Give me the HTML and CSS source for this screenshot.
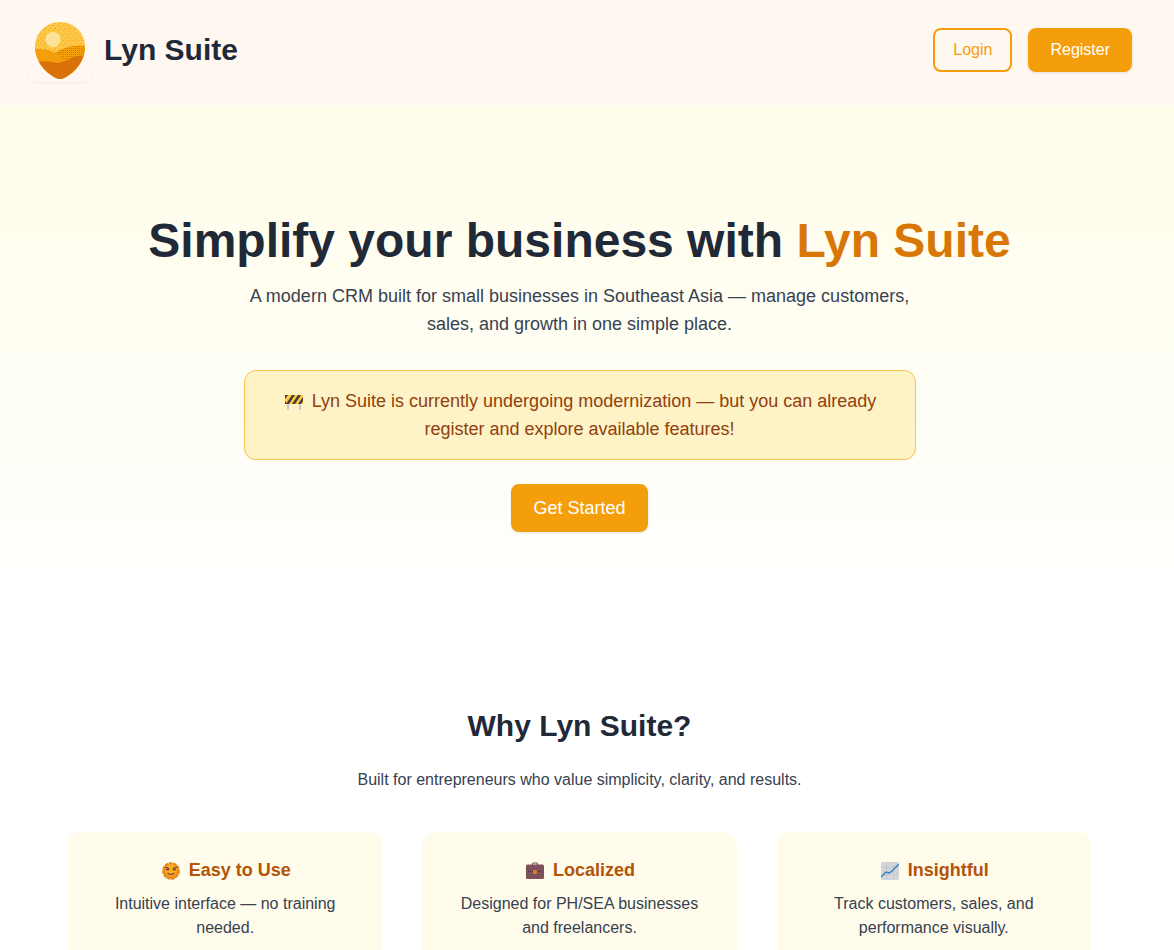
FILE: index.html
```html
<!DOCTYPE html>
<html lang="en">
<head>
  <meta charset="UTF-8">
  <meta name="viewport" content="width=device-width, initial-scale=1.0">
  <title>Lyn Suite</title>
  <link rel="stylesheet" href="styles.css">
</head>
<body>

  <header class="site-header">
    <a class="brand" href="#">
      <span class="brand-logo">
        <svg viewBox="0 0 50 57" width="50" height="57" aria-hidden="true">
          <defs>
            <clipPath id="drop">
              <path d="M25 0C39 0 50 11 50 25C50 38 41 50 29 56Q25 58 21 56C9 50 0 38 0 25C0 11 11 0 25 0Z"/>
            </clipPath>
            <pattern id="grain" width="5" height="5" patternUnits="userSpaceOnUse">
              <rect x="0" y="1" width="1" height="1" fill="#f5a21a"/>
              <rect x="3" y="3" width="1" height="1" fill="#f5a21a"/>
            </pattern>
            <pattern id="sand" width="2" height="2" patternUnits="userSpaceOnUse">
              <rect width="2" height="2" fill="#f59e0b"/>
              <rect width="1" height="1" fill="#d97706"/>
            </pattern>
          </defs>
          <g clip-path="url(#drop)">
            <rect width="50" height="57" fill="#fdc647"/>
            <rect width="50" height="30" fill="url(#grain)"/>
            <circle cx="18" cy="17.500" r="7.500" fill="#fde39a"/>
            <path d="M0 27Q10 26 20 31Q34 22 50 24V57H0Z" fill="#f59e0b"/>
            <path d="M20 31Q34 22 50 24V34Q36 35 30 38Z" fill="url(#sand)"/>
            <path d="M0 40Q12 38 22 41Q30 40 36 36Q42 33 50 34V57H0Z" fill="#d97309"/>
          </g>
        </svg>
      </span>
      <span class="brand-name">Lyn Suite</span>
    </a>
    <nav class="header-actions">
      <a class="btn btn-outline" href="#login">Login</a>
      <a class="btn btn-primary" href="#register">Register</a>
    </nav>
  </header>

  <main>
    <section class="hero">
      <h1>Simplify your business with <span class="accent">Lyn Suite</span></h1>
      <p class="hero-text">A modern CRM built for small businesses in Southeast Asia — manage customers, sales, and growth in one simple place.</p>
      <div class="notice">
        <svg class="icon" viewBox="0 0 18 18" aria-hidden="true">
          <path d="M3 10V17M15 10V17" stroke="#b9bdc6" stroke-width="1.5"/>
          <rect y="2" width="18" height="9" fill="#ffc83d"/>
          <path d="M0 2H3L0 6ZM7 2H10L4 11H1ZM13 2H16L10 11H7ZM18 4V8L16 11H13ZM0 8L2 11H0Z" fill="#433b3b"/>
        </svg>
        Lyn Suite is currently undergoing modernization — but you can already register and explore available features!
      </div>
      <a class="btn btn-primary btn-large" href="#register">Get Started</a>
    </section>

    <section class="features">
      <h2>Why Lyn Suite?</h2>
      <p class="features-text">Built for entrepreneurs who value simplicity, clarity, and results.</p>
      <div class="cards">
        <article class="card">
          <h3>
            <svg class="icon" viewBox="0 0 18 18" aria-hidden="true">
              <circle cx="9" cy="9" r="7.8" fill="#f59414" stroke="#e48213" stroke-width="2" stroke-dasharray="3.5 0.8"/>
              <circle cx="9" cy="8" r="6" fill="#fdab27"/>
              <path d="M3 5L7 6.5M15 5L11 6.5M4 8Q5.500 6.500 7 8M11 8Q12.500 6.500 14 8M5.500 11Q9 14 12.500 11" fill="none" stroke="#74452f" stroke-width="1.200"/>
            </svg>
            Easy to Use
          </h3>
          <p>Intuitive interface — no training needed.</p>
        </article>
        <article class="card">
          <h3>
            <svg class="icon" viewBox="0 0 18 18" aria-hidden="true">
              <path d="M6.500 4V2.500Q6.500 1 7.500 1H10.500Q11.500 1 11.500 2.500V4" fill="none" stroke="#6b4650" stroke-width="1.200"/>
              <rect y="2.500" width="18" height="14.500" rx="1.500" fill="#7d505c"/>
              <path d="M2 9.500H16" stroke="#4a2f3d" stroke-dasharray="1 1"/>
              <rect x="7" y="8" width="4" height="4" rx="1" fill="#d67d2e"/>
            </svg>
            Localized
          </h3>
          <p>Designed for PH/SEA businesses and freelancers.</p>
        </article>
        <article class="card">
          <h3>
            <svg class="icon" viewBox="0 0 18 18" aria-hidden="true">
              <rect width="18" height="18" rx="1.500" fill="#d3d5da"/>
              <path d="M0 5.500H18M0 12.500H18M5.500 0V18M12.500 0V18" stroke="#bfc3c9" stroke-width="1" stroke-dasharray="2 1"/>
              <path d="M0 15L5 10L8 11L10 10L18 2" fill="none" stroke="#3483c9" stroke-width="1.500"/>
            </svg>
            Insightful
          </h3>
          <p>Track customers, sales, and performance visually.</p>
        </article>
      </div>
    </section>
  </main>

</body>
</html>
```
FILE: styles.css
```css
* {
  box-sizing: border-box;
}

body {
  --scrollbar: 15px;
  margin: 0;
  background: #ffffff;
  font-family: "Liberation Sans", Arial, sans-serif;
  font-size: 16px;
  line-height: 24px;
  color: #374151;
}

h1, h2, h3, p {
  margin: 0;
}

a {
  text-decoration: none;
}

.site-header {
  display: flex;
  justify-content: space-between;
  align-items: center;
  padding: 18px 28px 24px;
  padding-right: calc(27px + var(--scrollbar));
  background: #fff8f1;
}

.brand {
  display: flex;
  align-items: center;
  gap: 12px;
  color: #1f2937;
}

.brand-logo {
  display: flex;
  justify-content: center;
  align-items: center;
  width: 64px;
  height: 64px;
  border-radius: 8px;
  box-shadow: 0 1px 2px rgba(0, 0, 0, 0.06);
}

.brand-name {
  font-size: 30px;
  line-height: 36px;
  font-weight: bold;
}

.header-actions {
  display: flex;
  gap: 16px;
}

.btn {
  display: inline-block;
  padding: 8px 20px;
  border: 2px solid #f59e0b;
  border-radius: 8px;
}

.btn-outline {
  padding: 8px 18px;
  color: #f59e0b;
}

.btn-primary {
  background: #f59e0b;
  color: #ffffff;
  box-shadow: 0 1px 3px rgba(0, 0, 0, 0.1);
}

.btn-large {
  font-size: 18px;
  line-height: 28px;
}

.hero {
  display: flex;
  flex-direction: column;
  align-items: center;
  padding: 106px 24px 96px;
  padding-right: calc(24px + var(--scrollbar));
  background: linear-gradient(#fffde9, #ffffff);
  text-align: center;
}

.hero h1 {
  margin-bottom: 12px;
  font-size: 48px;
  line-height: 58px;
  color: #1f2937;
}

.hero h1 .accent {
  color: #d97706;
}

.hero-text {
  max-width: 672px;
  margin-bottom: 32px;
  font-size: 18px;
  line-height: 28px;
}

.notice {
  max-width: 672px;
  margin-bottom: 24px;
  padding: 16px 24px;
  border: 1px solid #fcc64d;
  border-radius: 12px;
  background: #fef3c7;
  box-shadow: 0 1px 2px rgba(0, 0, 0, 0.05);
  font-size: 18px;
  line-height: 28px;
  color: #92400e;
}

.icon {
  width: 18px;
  height: 18px;
  margin: 0 4px 0 2px;
  vertical-align: -4px;
}

.features {
  padding: 80px 68px;
  padding-right: calc(68px + var(--scrollbar));
  text-align: center;
}

.features h2 {
  margin-bottom: 24px;
  font-size: 30px;
  line-height: 36px;
  color: #1f2937;
}

.features-text {
  margin-bottom: 40px;
}

.cards {
  display: grid;
  grid-template-columns: repeat(3, 1fr);
  gap: 40px;
}

.card {
  padding: 24px 32px;
  border-radius: 12px;
  background: #fffceb;
}

.card h3 {
  margin-bottom: 8px;
  font-size: 18px;
  line-height: 28px;
  color: #b45309;
}
```
